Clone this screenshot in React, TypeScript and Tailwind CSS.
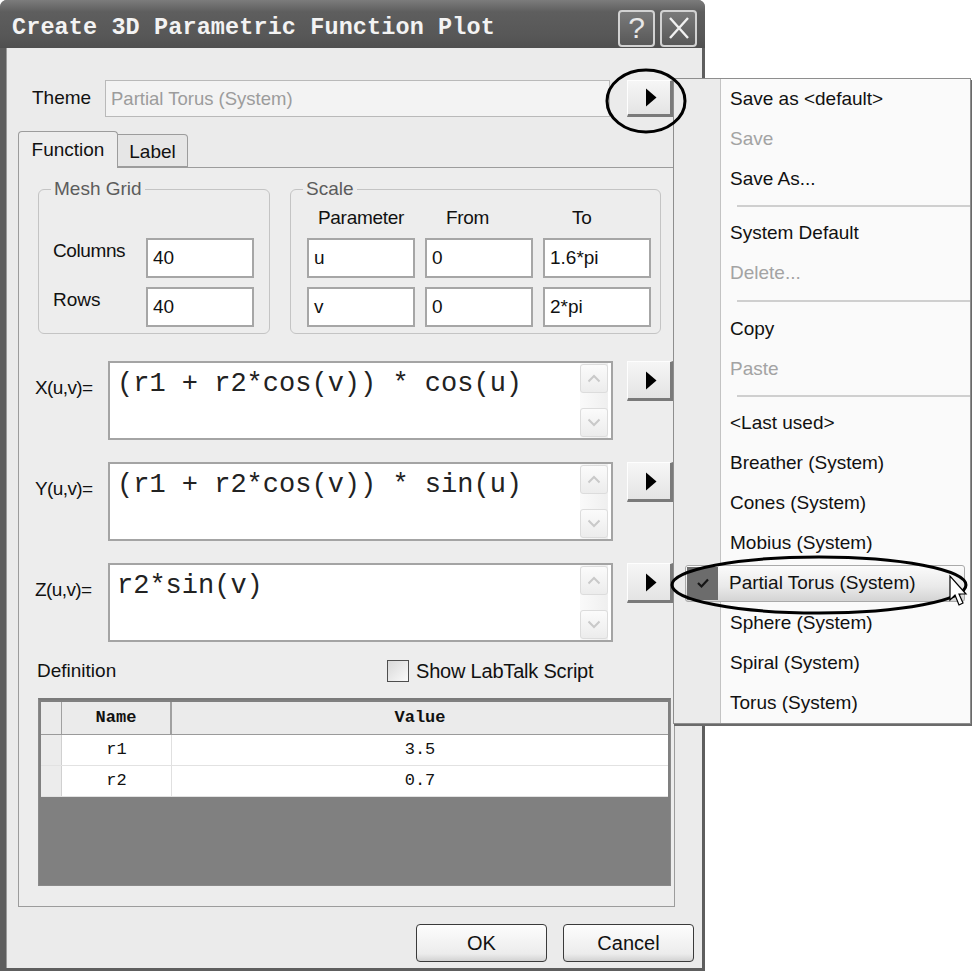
import React from "react";

function TriBtn({ h }: { h: string }) {
  return (
    <div
      className={`${h} w-[46px] shrink-0 flex items-center justify-center pl-[3px] bg-[linear-gradient(#f6f6f6,#e4e4e4)] border-t border-l border-t-[#fefefe] border-l-[#fefefe] border-r-[3px] border-b-[3px] border-r-[#7a7a7a] border-b-[#7a7a7a]`}
    >
      <svg width="12" height="19" viewBox="0 0 12 19">
        <path d="M1 0.5 L11.5 9.5 L1 18.5 Z" fill="#000" />
      </svg>
    </div>
  );
}

function MiniScroll() {
  return (
    <div className="w-[28px] h-full flex flex-col justify-between py-[1px] bg-[linear-gradient(to_right,#fafafa,#efefef)]">
      <div className="h-[29px] rounded-[3px] border border-[#dcdcdc] bg-[linear-gradient(#fbfbfb,#ececec)] flex items-center justify-center">
        <svg width="14" height="9" viewBox="0 0 14 9">
          <path d="M1.5 7.5 L7 2 L12.5 7.5" fill="none" stroke="#c9c9c9" strokeWidth="2" />
        </svg>
      </div>
      <div className="h-[29px] rounded-[3px] border border-[#dcdcdc] bg-[linear-gradient(#fbfbfb,#ececec)] flex items-center justify-center">
        <svg width="14" height="9" viewBox="0 0 14 9">
          <path d="M1.5 1.5 L7 7 L12.5 1.5" fill="none" stroke="#c9c9c9" strokeWidth="2" />
        </svg>
      </div>
    </div>
  );
}

function FormulaRow({ label, text }: { label: string; text: string }) {
  return (
    <div className="flex items-start h-[79px]">
      <div className="w-[89px] shrink-0 pl-[16px] pt-[16px] text-[19px] leading-[22px] tracking-[-0.6px] text-[#111]">
        {label}
      </div>
      <div className="w-[505px] h-[79px] shrink-0 bg-white border-2 border-[#a4a4a4] flex justify-between pl-[7px] pr-[3px]">
        <div className="font-['Liberation_Mono',monospace] text-[27px] leading-[30px] pt-[6px] text-[#222] whitespace-pre">
          {text}
        </div>
        <MiniScroll />
      </div>
      <div className="ml-[14px]">
        <TriBtn h="h-[40px]" />
      </div>
    </div>
  );
}

function Field({ value, w }: { value: string; w: string }) {
  return (
    <div
      className={`${w} h-[40px] shrink-0 bg-white border-2 border-[#a6a6a6] flex items-center pl-[5px] text-[19px] text-[#111]`}
    >
      {value}
    </div>
  );
}

type MenuItem =
  | { kind: "item"; label: string; disabled?: boolean; checked?: boolean }
  | { kind: "sep"; h: string };

const menu: MenuItem[] = [
  { kind: "item", label: "Save as <default>" },
  { kind: "item", label: "Save", disabled: true },
  { kind: "item", label: "Save As..." },
  { kind: "sep", h: "h-[14px]" },
  { kind: "item", label: "System Default" },
  { kind: "item", label: "Delete...", disabled: true },
  { kind: "sep", h: "h-[16px]" },
  { kind: "item", label: "Copy" },
  { kind: "item", label: "Paste", disabled: true },
  { kind: "sep", h: "h-[14px]" },
  { kind: "item", label: "<Last used>" },
  { kind: "item", label: "Breather (System)" },
  { kind: "item", label: "Cones (System)" },
  { kind: "item", label: "Mobius (System)" },
  { kind: "item", label: "Partial Torus (System)", checked: true },
  { kind: "item", label: "Sphere (System)" },
  { kind: "item", label: "Spiral (System)" },
  { kind: "item", label: "Torus (System)" },
];

function Menu() {
  return (
    <div className="absolute left-[673px] top-[78px] w-[298px] border border-[#8e8e8e] shadow-[1px_2px_0_#6a6a6a] bg-[linear-gradient(to_right,#ebebeb_46px,#c3c3c3_46px,#c3c3c3_47px,#fafafa_47px)] flex flex-col font-['Liberation_Sans',Arial,sans-serif] text-[19px]">
      {menu.map((m, i) => {
        if (m.kind === "sep") {
          return (
            <div key={i} className={`${m.h} flex items-center pl-[63px]`}>
              <div className="h-[2px] w-full bg-[#cfcfcf]" />
            </div>
          );
        }
        if (m.checked) {
          return (
            <div key={i} className="h-[40px] flex items-center pl-[11px] pr-[5px]">
              <div className="h-[37px] flex-1 flex items-center rounded-[3px] border border-[#a9a9a9] bg-[linear-gradient(#fbfbfb,#e9e9e9_60%,#d4d4d4)]">
                <div className="w-[31px] h-[33px] ml-[1px] bg-[#6c6c6c] flex items-center justify-center">
                  <svg width="14" height="12" viewBox="0 0 14 12">
                    <path d="M2 6 L5.5 9.5 L12 2.5" fill="none" stroke="#151515" strokeWidth="2.2" />
                  </svg>
                </div>
                <span className="ml-[11px] text-[#111]">{m.label}</span>
              </div>
            </div>
          );
        }
        return (
          <div
            key={i}
            className={`h-[40px] flex items-center pl-[56px] ${m.disabled ? "text-[#a3a3a3]" : "text-[#111]"}`}
          >
            {m.label}
          </div>
        );
      })}
    </div>
  );
}

export default function App() {
  return (
    <div className="relative w-[972px] h-[972px] bg-white overflow-hidden font-['Liberation_Sans',Arial,sans-serif] text-[#111]">
      {/* Dialog */}
      <div className="w-[705px] h-[971px] flex flex-col bg-[#5e5e5e] rounded-t-[7px]">
        {/* Title bar */}
        <div className="h-[48px] shrink-0 flex items-center pt-[8px] pl-[12px] pr-[8px] rounded-t-[7px] bg-[linear-gradient(#7c7c7c,#5e5e5e_25%,#575757_75%,#4f4f4f)]">
          <span className="font-['Liberation_Mono',monospace] font-bold text-[23.5px] text-[#f3f3f3] tracking-[0.1px]">
            Create 3D Parametric Function Plot
          </span>
          <div className="ml-auto flex gap-[5px]">
            <div className="w-[37px] h-[37px] rounded-[4px] border-2 border-[#d2d2d2] bg-[linear-gradient(#7a7a7a,#585858)] flex items-center justify-center text-[30px] leading-none text-[#e8e8e8]">
              ?
            </div>
            <div className="w-[37px] h-[37px] rounded-[4px] border-2 border-[#d2d2d2] bg-[linear-gradient(#7a7a7a,#585858)] flex items-center justify-center">
              <svg width="22" height="24" viewBox="0 0 22 24">
                <path d="M2 2 L20 22 M20 2 L2 22" stroke="#f0f0f0" strokeWidth="2.4" />
              </svg>
            </div>
          </div>
        </div>

        {/* Body */}
        <div className="flex-1 flex flex-col ml-[6px] mr-[3px] mb-[3px] bg-[#ebebeb] border-l border-l-[#9a9a9a]">
          {/* Theme row */}
          <div className="mt-[32px] flex items-center pl-[25px] h-[37px]">
            <span className="w-[73px] text-[19px] text-[#111]">Theme</span>
            <div className="w-[505px] h-[37px] bg-[#f3f3f3] border border-[#b9b9b9] flex items-center pl-[5px] text-[18.5px] text-[#9c9c9c]">
              Partial Torus (System)
            </div>
            <div className="ml-[17px]">
              <TriBtn h="h-[37px]" />
            </div>
          </div>

          {/* Tabs */}
          <div className="mt-[13px] ml-[11px] flex items-end h-[37px] relative z-10">
            <div className="w-[100px] h-[37px] border border-b-0 border-[#9c9c9c] rounded-t-[4px] bg-[#ededed] flex items-start justify-center pt-[4px] text-[19px] -mb-px">
              Function
            </div>
            <div className="w-[70px] h-[33px] border border-l-0 border-[#9c9c9c] rounded-tr-[4px] bg-[#e6e6e6] flex items-start justify-center pt-[3px] text-[19px]">
              Label
            </div>
          </div>

          {/* Panel */}
          <div className="ml-[11px] w-[657px] h-[740px] border border-[#9c9c9c] bg-[#ededed] flex flex-col">
            {/* Groups */}
            <div className="mt-[21px] pl-[19px] flex gap-[20px]">
              <div className="w-[232px] h-[145px] border border-[#c4c4c4] rounded-[6px] flex flex-col">
                <div className="-mt-[12px] h-[22px] pl-[12px] leading-[22px] text-[19px] text-[#5c5c5c]">
                  <span className="bg-[#ededed] px-[3px]">Mesh Grid</span>
                </div>
                <div className="mt-[38px] flex items-start">
                  <span className="w-[107px] pl-[14px] pt-[2px] text-[19px] leading-[22px] tracking-[-0.4px]">Columns</span>
                  <Field value="40" w="w-[108px]" />
                </div>
                <div className="mt-[9px] flex items-start">
                  <span className="w-[107px] pl-[14px] pt-[2px] text-[19px] leading-[22px]">Rows</span>
                  <Field value="40" w="w-[108px]" />
                </div>
              </div>

              <div className="w-[371px] h-[145px] border border-[#c4c4c4] rounded-[6px] flex flex-col">
                <div className="-mt-[12px] h-[22px] pl-[12px] leading-[22px] text-[19px] text-[#5c5c5c]">
                  <span className="bg-[#ededed] px-[3px]">Scale</span>
                </div>
                <div className="mt-[7px] h-[22px] pl-[16px] flex gap-[10px] text-[19px] leading-[22px] tracking-[-0.3px]">
                  <span className="w-[108px] text-center">Parameter</span>
                  <span className="w-[108px] pl-[21px]">From</span>
                  <span className="w-[108px] pl-[29px]">To</span>
                </div>
                <div className="mt-[9px] pl-[16px] flex gap-[10px]">
                  <Field value="u" w="w-[108px]" />
                  <Field value="0" w="w-[108px]" />
                  <Field value="1.6*pi" w="w-[108px]" />
                </div>
                <div className="mt-[9px] pl-[16px] flex gap-[10px]">
                  <Field value="v" w="w-[108px]" />
                  <Field value="0" w="w-[108px]" />
                  <Field value="2*pi" w="w-[108px]" />
                </div>
              </div>
            </div>

            {/* Formulas */}
            <div className="mt-[27px] flex flex-col gap-[22px]">
              <FormulaRow label="X(u,v)=" text="(r1 + r2*cos(v)) * cos(u)" />
              <FormulaRow label="Y(u,v)=" text="(r1 + r2*cos(v)) * sin(u)" />
              <FormulaRow label="Z(u,v)=" text="r2*sin(v)" />
            </div>

            {/* Definition row */}
            <div className="mt-[17px] h-[24px] flex items-center pl-[18px] text-[19px]">
              <span className="w-[350px]">Definition</span>
              <div className="w-[22px] h-[22px] border border-[#4e4e4e] bg-[linear-gradient(135deg,#d8d8d8,#fafafa)]" />
              <span className="ml-[7px] text-[20px] tracking-[-0.2px]">Show LabTalk Script</span>
            </div>

            {/* Table */}
            <div className="mt-[15px] ml-[19px] w-[633px] h-[188px] border border-[#8a8a8a] border-t-2 border-t-[#7a7a7a] bg-[#808080] p-[2px] flex flex-col font-['Liberation_Mono',monospace] text-[17px]">
              <div className="h-[33px] flex bg-[#ebebeb] border-b border-[#9a9a9a]">
                <div className="w-[21px] border-r border-[#a0a0a0]" />
                <div className="w-[110px] border-r-2 border-[#a0a0a0] flex items-center justify-center font-bold">Name</div>
                <div className="flex-1 flex items-center justify-center font-bold">Value</div>
              </div>
              {[
                ["r1", "3.5"],
                ["r2", "0.7"],
              ].map(([n, v]) => (
                <div key={n} className="h-[31px] flex bg-white border-b border-[#e2e2e2]">
                  <div className="w-[21px] bg-[#ececec] border-r border-[#d0d0d0]" />
                  <div className="w-[110px] border-r border-[#e0e0e0] flex items-center justify-center">{n}</div>
                  <div className="flex-1 flex items-center justify-center">{v}</div>
                </div>
              ))}
            </div>
          </div>

          {/* Buttons */}
          <div className="mt-[17px] flex justify-end gap-[16px] pr-[8px]">
            <div className="w-[131px] h-[38px] rounded-[4px] border border-[#3a3a3a] bg-[linear-gradient(#fdfdfd,#ececec_80%,#d2d2d2)] flex items-center justify-center text-[20px]">
              OK
            </div>
            <div className="w-[131px] h-[38px] rounded-[4px] border border-[#3a3a3a] bg-[linear-gradient(#fdfdfd,#ececec_80%,#d2d2d2)] flex items-center justify-center text-[20px]">
              Cancel
            </div>
          </div>
        </div>
      </div>

      <Menu />

      {/* Annotations */}
      <svg className="absolute left-0 top-0 pointer-events-none" width="972" height="972" viewBox="0 0 972 972">
        <ellipse cx="646" cy="101" rx="39" ry="31" fill="none" stroke="#000" strokeWidth="3" />
        <ellipse cx="819" cy="585" rx="147" ry="28" fill="none" stroke="#000" strokeWidth="3" />
        <path d="M950 576 L950 600 L955 595 L959 605 L963 603 L959 594 L966 594 Z" fill="#fff" stroke="#000" strokeWidth="1.2" />
      </svg>
    </div>
  );
}
